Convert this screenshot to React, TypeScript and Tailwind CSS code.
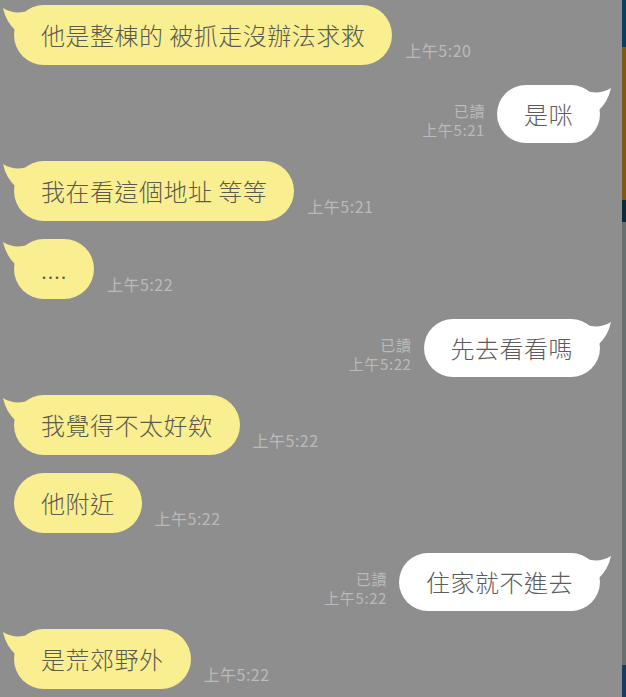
type Msg = {
  side: "left" | "right";
  text: string;
  time: string;
  tail?: boolean;
};

const messages: Msg[] = [
  { side: "left", text: "他是整棟的 被抓走沒辦法求救", time: "上午5:20", tail: true },
  { side: "right", text: "是咪", time: "上午5:21", tail: true },
  { side: "left", text: "我在看這個地址 等等", time: "上午5:21", tail: true },
  { side: "left", text: "....", time: "上午5:22", tail: true },
  { side: "right", text: "先去看看嗎", time: "上午5:22", tail: true },
  { side: "left", text: "我覺得不太好欸", time: "上午5:22", tail: true },
  { side: "left", text: "他附近", time: "上午5:22" },
  { side: "right", text: "住家就不進去", time: "上午5:22", tail: true },
  { side: "left", text: "是荒郊野外", time: "上午5:22", tail: true },
];

function Tail({ side, color }: { side: "left" | "right"; color: string }) {
  return (
    <svg
      width="30"
      height="30"
      viewBox="-12 0 30 30"
      className={
        side === "left"
          ? "absolute left-[-12px] top-0"
          : "absolute right-[-12px] top-0 -scale-x-100"
      }
    >
      <path d="M-11 3 Q0 10 14 6 L14 26 L2 26 Q-8 17 -11 3 Z" fill={color} />
    </svg>
  );
}

function Bubble({ msg }: { msg: Msg }) {
  const left = msg.side === "left";
  return (
    <div
      className={
        left
          ? "relative flex h-[60px] items-center rounded-full bg-[#f9ee90] px-[27px] text-[24px] font-light tracking-[0.5px] text-[#5a5a50]"
          : "relative mt-[2px] flex h-[58px] items-center rounded-full bg-white px-[27px] text-[24px] font-light tracking-[0.5px] text-[#5c5c5c]"
      }
    >
      {msg.tail && <Tail side={msg.side} color={left ? "#f9ee90" : "#ffffff"} />}
      <span className="relative whitespace-pre">{msg.text}</span>
    </div>
  );
}

export default function App() {
  return (
    <div
      className="flex h-[697px] w-[626px] overflow-hidden bg-[#8e8e8e]"
      style={{ fontFamily: '"Noto Sans CJK TC", "Noto Sans", sans-serif' }}
    >
      <div className="flex flex-1 flex-col gap-[18px] pl-[14px] pr-[22px] pt-[5px]">
        {messages.map((m, i) =>
          m.side === "left" ? (
            <div key={i} className="flex h-[60px] items-end">
              <Bubble msg={m} />
              <span className="mb-[5px] ml-[13px] text-[16px] leading-[19px] tracking-[0.5px] text-[#bababa]">
                {m.time}
              </span>
            </div>
          ) : (
            <div key={i} className="flex h-[60px] items-end justify-end">
              <div className="mb-[4px] mr-[12px] flex flex-col items-end gap-[1px] text-[15px] leading-[18px] tracking-[0.6px] text-[#bababa]">
                <div className="h-[18px]">已讀</div>
                <div className="h-[18px]">{m.time}</div>
              </div>
              <Bubble msg={m} />
            </div>
          )
        )}
      </div>
      <div className="flex w-[4px] flex-col">
        <div className="h-[47px] bg-[#0e3d5b]" />
        <div className="h-[153px] bg-[#7a5a16]" />
        <div className="h-[22px] bg-[#10293a]" />
        <div className="flex-1 bg-[#6a7070]" />
        <div className="h-[32px] bg-[#1a3a5e]" />
      </div>
    </div>
  );
}
